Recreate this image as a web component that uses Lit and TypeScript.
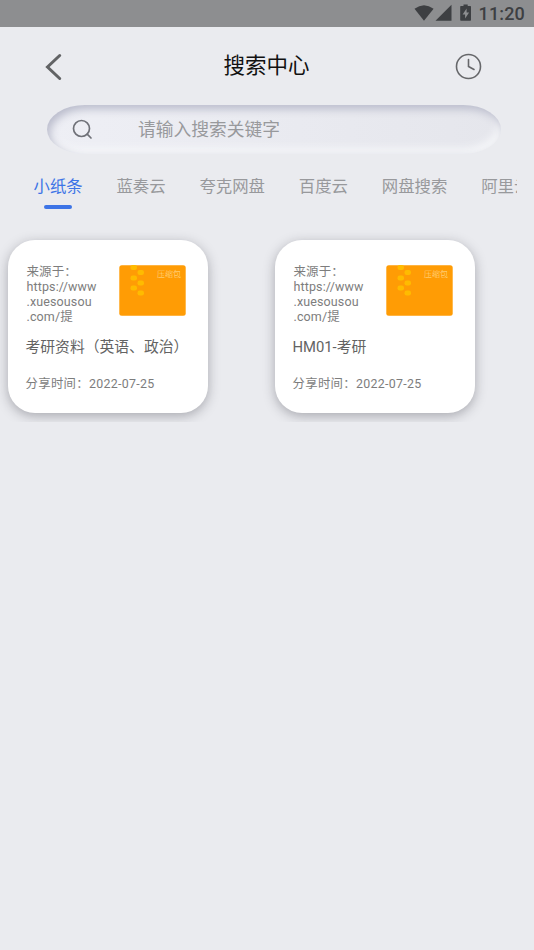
import { LitElement, html, css, svg } from "lit";
import { customElement, property, state } from "lit/decorators.js";
import { classMap } from "lit/directives/class-map.js";

const FONT = css`Roboto, "Noto Sans CJK SC", sans-serif`;

@customElement("status-bar")
class StatusBar extends LitElement {
  static styles = css`
    :host {
      display: flex;
      align-items: center;
      justify-content: flex-end;
      height: 27px;
      box-sizing: border-box;
      padding-right: 9px;
      background: #8d8e90;
      color: #3d3f42;
      font: 500 18px/27px ${FONT};
      letter-spacing: 0.15px;
    }
    svg { display: block; fill: currentColor; }
    .icons { margin-right: 7px; }
  `;
  render() {
    return html`
      <svg class="icons" width="58" height="27" viewBox="0 0 58 27">
        <path d="M0.5 8.8Q10 1.6 19.6 8.8L10 20.8Z" />
        <path d="M37.5 4.8V20.8H21.5Z" />
        <path fill-rule="evenodd" d="M49.5 4.5h4.2v1.6h2.6q.7 0 .7.7v13.3q0 .7-.7.7h-9.4q-.7 0-.7-.7V6.800q0-.7.7-.7h2.6ZM52.600 8.500l-4 6h2.500v4l4-6h-2.500Z" />
      </svg>
      <span>11:20</span>
    `;
  }
}

@customElement("archive-icon")
class ArchiveIcon extends LitElement {
  static styles = css`
    :host { display: block; width: 67px; height: 51px; }
    svg { display: block; }
    .base { fill: #ff9c05; }
    .zip { fill: #ffbb00; }
    text { fill: #ffdf9e; font: 300 8px ${FONT}; letter-spacing: 0; }
  `;
  render() {
    const teeth = [[11.5, 0], [18.5, 5], [11.5, 10.5], [18.5, 15.5], [11.5, 20.5], [18.5, 25.5]];
    return html`
      <svg width="67" height="51" viewBox="0 0 67 51">
        <rect class="base" x="0.3" y="0.3" width="66.4" height="50.4" rx="2.5" />
        ${teeth.map(([x, y]) => svg`<rect class="zip" x=${x} y=${y} width="6.5" height="5" rx="2.2" />`)}
        <text x="38" y="12.3">压缩包</text>
      </svg>
    `;
  }
}

@customElement("result-card")
class ResultCard extends LitElement {
  @property() source = "";
  @property() heading = "";
  @property() date = "";

  static styles = css`
    :host {
      display: block;
      box-sizing: border-box;
      width: 200px;
      height: 173px;
      padding: 24px 17px 0 17.5px;
      border-radius: 27px;
      background: #fff;
      box-shadow: 0 3px 12px rgba(40, 42, 52, 0.34);
      color: #7d7d7d;
      font: 12.4px/15px ${FONT};
      letter-spacing: 0.3px;
    }
    .top { display: flex; justify-content: space-between; height: 63px; padding: 0 5.5px 0 1px; }
    .source { width: 76px; white-space: pre-line; font-size: 12.5px; letter-spacing: 0.12px; }
    archive-icon { margin-top: 1px; }
    .heading {
      margin-top: 9px;
      font-size: 14.8px;
      line-height: 22px;
      letter-spacing: 0;
      color: #636363;
      white-space: nowrap;
    }
    .date { margin-top: 18px; }
  `;
  render() {
    return html`
      <div class="top">
        <div class="source">${this.source}</div>
        <archive-icon></archive-icon>
      </div>
      <div class="heading">${this.heading}</div>
      <div class="date">分享时间：${this.date}</div>
    `;
  }
}

@customElement("app-root")
class AppRoot extends LitElement {
  @state() private active = 0;
  private tabs = ["小纸条", "蓝奏云", "夸克网盘", "百度云", "网盘搜索", "阿里云盘"];
  private results = [
    { heading: "考研资料（英语、政治）", date: "2022-07-25" },
    { heading: "HM01-考研", date: "2022-07-25" },
  ];

  static styles = css`
    :host {
      display: block;
      height: 950px;
      overflow: hidden;
      background: #eaebef;
      font-family: ${FONT};
    }
    svg { display: block; fill: none; stroke-linecap: round; }
    header {
      display: flex;
      align-items: center;
      justify-content: space-between;
      height: 78px;
      padding: 1px 52px 0 45px;
      box-sizing: border-box;
    }
    .back { stroke: #626365; stroke-width: 3; }
    .clock { stroke: #66676a; stroke-width: 1.6; }
    h1 { margin: -2px 0 0 15px; font-size: 21.5px; font-weight: 400; line-height: 30px; color: #111; }
    .search {
      display: flex;
      align-items: center;
      box-sizing: border-box;
      width: 454px;
      height: 49px;
      margin-left: 47px;
      padding-left: 25px;
      border-radius: 38px / 24.5px;
      background: linear-gradient(90deg, #eeeff5, #e5e6ec);
      box-shadow: inset 3px 4px 8px #b9bbcb, inset -3px -5px 9px #f7f8fa;
    }
    .lens { stroke: #6f7178; stroke-width: 1.7; }
    .placeholder { margin: 1px 0 0 45px; font-size: 17.75px; line-height: 26px; color: #98999c; }
    nav {
      display: flex;
      gap: 33.8px;
      width: 483.5px;
      height: 46px;
      margin: 20px 0 0 33.5px;
      overflow: hidden;
    }
    .tab {
      display: flex;
      flex: none;
      flex-direction: column;
      align-items: center;
      font-size: 16.4px;
      line-height: 26px;
      color: #98999c;
      white-space: nowrap;
    }
    .tab.on { color: #3d74e6; }
    .tab.on::after {
      content: "";
      width: 28px;
      height: 4px;
      margin-top: 5px;
      border-radius: 2px;
      background: #3d74e6;
    }
    .results {
      display: grid;
      grid-template-columns: 267px 267px;
      height: 201.5px;
      box-sizing: border-box;
      padding: 20px 0 0 8px;
      overflow: hidden;
    }
  `;

  render() {
    return html`
      <status-bar></status-bar>
      <header>
        <svg class="back" width="18" height="28" viewBox="0 0 18 28"><path d="M14.7 2.5L2.5 14L14.7 25.5" /></svg>
        <h1>搜索中心</h1>
        <svg class="clock" width="27" height="27" viewBox="0 0 27 27">
          <circle cx="13.5" cy="13.5" r="12" /><path d="M13.5 6.5V13.5L19 16.5" />
        </svg>
      </header>
      <div class="search">
        <svg class="lens" width="21" height="21" viewBox="0 0 21 21">
          <circle cx="9.5" cy="9.5" r="8" /><path d="M15.2 15.2L19 19" />
        </svg>
        <span class="placeholder">请输入搜索关键字</span>
      </div>
      <nav>
        ${this.tabs.map((t, i) => html`
          <div class=${classMap({ tab: true, on: i === this.active })} @click=${() => (this.active = i)}>${t}</div>
        `)}
      </nav>
      <section class="results">
        ${this.results.map((r) => html`
          <result-card .source=${"来源于：\nhttps://www\n.xuesousou\n.com/提"} .heading=${r.heading} .date=${r.date}></result-card>
        `)}
      </section>
    `;
  }
}
